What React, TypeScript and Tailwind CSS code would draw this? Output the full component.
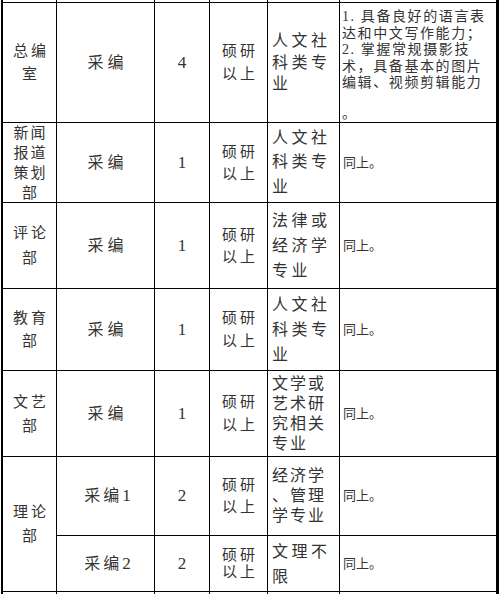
import React from "react";

const F = { fontFamily: '"Liberation Serif", "Noto Sans CJK SC", serif' };

function Lines({ lines, lh, ls }: { lines: string[]; lh: number; ls: number }) {
  return (
    <div style={{ lineHeight: `${lh}px`, letterSpacing: `${ls}px` }}>
      {lines.map((l, i) => (
        <div key={i} className="whitespace-nowrap">
          {l}
        </div>
      ))}
    </div>
  );
}

function C1({ lines, lh, ls = 3 }: { lines: string[]; lh: number; ls?: number }) {
  return (
    <div className="bg-white flex items-center justify-center text-center text-[15px] text-[#333]" style={{ paddingLeft: ls }}>
      <Lines lines={lines} lh={lh} ls={ls} />
    </div>
  );
}

function C2({ text, num }: { text: string; num?: string }) {
  return (
    <div className="bg-white flex items-center justify-center text-[16px] text-[#333] pl-[4px]">
      <span className={num ? "tracking-[3px]" : "tracking-[4px]"}>{text}</span>
      {num && <span className="text-[17px]">{num}</span>}
    </div>
  );
}

function C3({ text }: { text: string }) {
  return <div className="bg-white flex items-center justify-center text-[17px] text-[#333]">{text}</div>;
}

function C4({ lh }: { lh: number }) {
  return (
    <div className="bg-white flex items-center justify-center text-center text-[15px] text-[#333] pl-[3px]">
      <Lines lines={["硕研", "以上"]} lh={lh} ls={3} />
    </div>
  );
}

function C5({ lines, lh, ls = 3.5 }: { lines: string[]; lh: number; ls?: number }) {
  return (
    <div className="bg-white flex items-center justify-start text-[16px] text-[#333] pl-[4px]">
      <Lines lines={lines} lh={lh} ls={ls} />
    </div>
  );
}

function C6() {
  return (
    <div className="bg-white flex items-center justify-start text-[13px] text-[#333] pl-[3px]">
      同上。
    </div>
  );
}

function Blank() {
  return <div className="bg-white" />;
}

export default function App() {
  return (
    <div className="w-[499px] h-[594px] overflow-hidden bg-white" style={F}>
      <div
        className="ml-[1px] w-[498px] h-[594px] bg-black grid gap-[1px] pl-[2px] pr-[2px]"
        style={{
          gridTemplateColumns: "53px 97px 54px 57px 71px 156px",
          gridTemplateRows: "2px 119px 79px 85px 81px 85px 78px 55px 2px",
        }}
      >
        <Blank /><Blank /><Blank /><Blank /><Blank /><Blank />

        {/* Row 1 */}
        <C1 lines={["总编", "室"]} lh={23} />
        <C2 text="采编" />
        <C3 text="4" />
        <C4 lh={23} />
        <C5 lines={["人文社", "科类专", "业"]} lh={21.5} />
        <div className="bg-white pl-[2px] pt-[6px] text-[14px] text-[#333] tracking-[1.6px] leading-[16.5px]">
          <div className="whitespace-nowrap">1. 具备良好的语言表</div>
          <div className="whitespace-nowrap">达和中文写作能力；</div>
          <div className="whitespace-nowrap">2. 掌握常规摄影技</div>
          <div className="whitespace-nowrap">术，具备基本的图片</div>
          <div className="whitespace-nowrap">编辑、视频剪辑能力</div>
          <div className="whitespace-nowrap mt-[14px]">。</div>
        </div>

        {/* Row 2 */}
        <C1 lines={["新闻", "报道", "策划", "部"]} lh={20} ls={2} />
        <C2 text="采编" />
        <C3 text="1" />
        <C4 lh={22} />
        <C5 lines={["人文社", "科类专", "业"]} lh={24.5} />
        <C6 />

        {/* Row 3 */}
        <C1 lines={["评论", "部"]} lh={25} />
        <C2 text="采编" />
        <C3 text="1" />
        <C4 lh={22} />
        <C5 lines={["法律或", "经济学", "专业"]} lh={25} />
        <C6 />

        {/* Row 4 */}
        <C1 lines={["教育", "部"]} lh={23} />
        <C2 text="采编" />
        <C3 text="1" />
        <C4 lh={23} />
        <C5 lines={["人文社", "科类专", "业"]} lh={25} />
        <C6 />

        {/* Row 5 */}
        <C1 lines={["文艺", "部"]} lh={24} />
        <C2 text="采编" />
        <C3 text="1" />
        <C4 lh={23} />
        <C5 lines={["文学或", "艺术研", "究相关", "专业"]} lh={20} ls={2} />
        <C6 />

        {/* Row 6 */}
        <div className="bg-white row-span-2 flex items-center justify-center text-center text-[15px] text-[#333] pl-[3px]">
          <Lines lines={["理论", "部"]} lh={24} ls={3} />
        </div>
        <C2 text="采编" num="1" />
        <C3 text="2" />
        <C4 lh={22} />
        <C5 lines={["经济学", "、管理", "学专业"]} lh={20} ls={2} />
        <C6 />

        {/* Row 7 */}
        <C2 text="采编" num="2" />
        <C3 text="2" />
        <C4 lh={17} />
        <C5 lines={["文理不", "限"]} lh={25} />
        <C6 />

        <Blank /><Blank /><Blank /><Blank /><Blank /><Blank />
      </div>
    </div>
  );
}
